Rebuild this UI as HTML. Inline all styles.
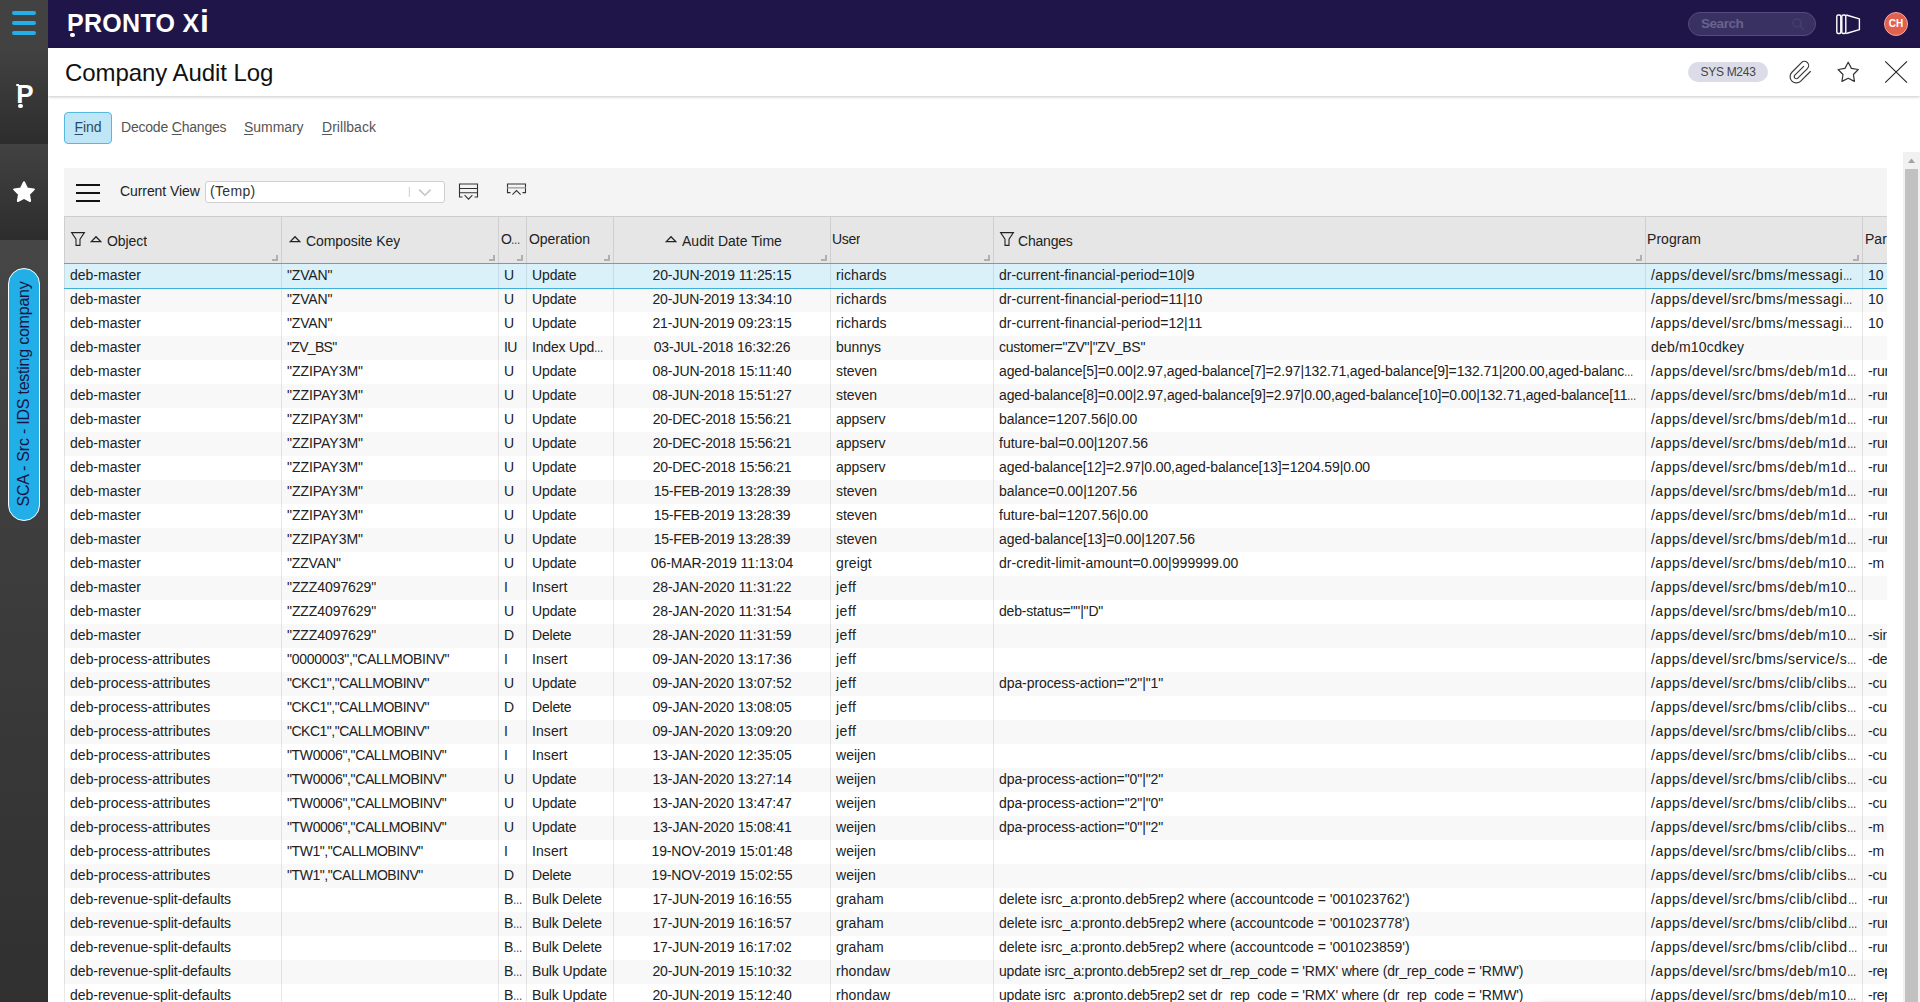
<!DOCTYPE html><html lang="en"><head><meta charset="utf-8"><title>Company Audit Log</title><style>
*{box-sizing:border-box}
html,body{margin:0;padding:0}
body{width:1920px;height:1002px;overflow:hidden;position:relative;background:#fff;
 font-family:"Liberation Sans",sans-serif;font-size:14px;color:#212121}
.abs{position:absolute}
#side{left:0;top:0;width:48px;height:1002px;background:linear-gradient(#464646,#2e2e2e)}
#side .c0{left:0;top:0;width:48px;height:48px;background:#424242}
#side .c1{left:0;top:48px;width:48px;height:96px;background:linear-gradient(#424242,#2d2d2d)}
#side .c2{left:0;top:144px;width:48px;height:96px;background:linear-gradient(#424242,#2d2d2d)}
#side .c3{left:0;top:240px;width:48px;height:762px;background:linear-gradient(#464646,#303030)}
.hb{left:12px;width:24px;height:4.5px;border-radius:2.5px;background:#24b0e6}
#top{left:48px;top:0;width:1872px;height:48px;background:#201548}
#logo{left:67px;top:7px;height:32px;line-height:32px;font-size:25px;font-weight:bold;color:#fff;white-space:nowrap;letter-spacing:.3px}
#search{left:1688px;top:12px;width:128px;height:24px;border-radius:12px;background:#3a3163;border:1px solid #544c7d;color:#69628f;font-weight:bold;font-size:13.5px;line-height:22px;padding-left:12px;letter-spacing:-.45px}
#avatar{left:1884px;top:12px;width:24px;height:24px;border-radius:12px;background:#e2604f;border:1px solid #f0a79b;color:#fff;font-size:10px;font-weight:bold;text-align:center;line-height:22px}
#title{left:65px;top:56px;height:34px;line-height:34px;font-size:24px;color:#111;white-space:nowrap}
#tbar{left:48px;top:48px;width:1872px;height:48px;background:#fff;box-shadow:0 1px 3px rgba(0,0,0,.22)}
#badge{left:1688px;top:62px;width:80px;height:20px;border-radius:10px;background:#dcdce8;color:#444;font-size:12px;line-height:20px;text-align:center;white-space:nowrap}
.btn{top:112px;height:32px;line-height:30px;color:#555;white-space:nowrap}
.btn u{text-decoration-thickness:1px;text-underline-offset:1.5px}
#find{left:64px;width:48px;border:1px solid #55b9e2;border-radius:4px;background:#bfe6f6;text-align:center;color:#2a4a66;line-height:28px}
#tool{left:64px;top:168px;width:1823px;height:48px;background:#f4f4f4}
.tl{left:76px;width:24px;height:2px;background:#111}
#cv{left:120px;top:180px;height:22px;line-height:22px;white-space:nowrap;color:#222}
#sel{left:205px;top:181px;width:240px;height:22px;border:1px solid #cfcfcf;border-radius:3px;background:#fff;line-height:18px;padding-left:4px;color:#333}
#grid{left:64px;top:216px;width:1823px;height:786px;overflow:hidden}
#hdr{left:0;top:0;width:1823px;height:47px;background:#e6e6e6;border-top:1px solid #cdcdcd}
.h{top:0;height:46px;line-height:46px;white-space:nowrap;color:#222;overflow:hidden}
.hs{top:1px;width:1px;height:46px;background:#cfcfcf}
.rz{width:6px;height:6px;border-right:2px solid #b0b0b0;border-bottom:2px solid #b0b0b0;top:39px}
.r{left:0;width:1823px;height:24px;line-height:24px;white-space:nowrap}
.r.e{background:#f8f8f8}
.r.sel{background:#daf1fa}
.c{top:-1px;height:24px;overflow:hidden;white-space:nowrap;padding-left:5px}
.vs{top:48px;width:1px;height:740px;background:rgba(0,0,0,.09)}
#sb{left:1903px;top:152px;width:17px;height:850px;background:#f1f1f1}
#sb .th{left:2px;top:17px;width:13px;height:840px;background:#c1c1c1}
</style></head><body>
<div id="top" class="abs"></div>
<div id="logo" class="abs">PRONTO X<span style="font-size:32px;line-height:0;margin-left:.6px">i</span></div><div class="abs" style="left:70.2px;top:32.6px;width:4.6px;height:4.6px;border-radius:50%;background:#fff"></div><div class="abs" style="left:68px;top:30.6px;width:8px;height:2.2px;background:#201548"></div>
<div id="search" class="abs">Search</div><svg class="abs" style="left:1788px;top:14px" width="20" height="20" viewBox="0 0 20 20" fill="none" stroke="#463e70" stroke-width="1.5"><circle cx="9" cy="9" r="4"/><path d="M12 12 L15.5 15.5"/></svg>
<svg class="abs" style="left:1832px;top:10px" width="32" height="28" viewBox="0 0 32 28" fill="none" stroke="#fff" stroke-width="1.4" stroke-linejoin="round"><rect x="4.8" y="5" width="4" height="18.5" rx="1.5"/><rect x="9.8" y="5" width="4" height="18.5" rx="1.5"/><path d="M14.2 5 L27.4 8.8 L27.4 19.7 L14.2 23.5"/></svg>
<div id="avatar" class="abs">CH</div>
<div id="tbar" class="abs"></div>
<div id="title" class="abs" style="letter-spacing:-0.064px">Company Audit Log</div>
<div id="badge" class="abs" style="letter-spacing:-0.283px">SYS M243</div>
<svg class="abs" style="left:1788.4px;top:59.6px" width="25" height="25" viewBox="0 0 24 24" fill="none" stroke="#3a3a3a" stroke-width="1.15" stroke-linecap="round" stroke-linejoin="round"><path d="M21.44 11.05l-9.19 9.19a6 6 0 0 1-8.49-8.49l9.19-9.19a4 4 0 0 1 5.66 5.66l-9.2 9.19a2 2 0 0 1-2.83-2.83l8.49-8.48"/></svg>
<svg class="abs" style="left:1834px;top:58px" width="28" height="28" viewBox="0 0 28 28" fill="none" stroke="#333" stroke-width="1.2" stroke-linejoin="round"><path d="M14.20 4.20 L17.43 10.35 L24.28 11.52 L19.43 16.50 L20.43 23.38 L14.20 20.30 L7.97 23.38 L8.97 16.50 L4.12 11.52 L10.97 10.35 Z"/></svg>
<svg class="abs" style="left:1882px;top:58px" width="28" height="28" viewBox="0 0 28 28" fill="none" stroke="#222" stroke-width="1.1"><path d="M3.2 3.4 L25 24.6 M25 3.4 L3.2 24.6"/></svg>
<div id="side" class="abs"><div class="abs c0"></div><div class="abs c1"></div><div class="abs c2"></div><div class="abs c3"></div>
<div class="abs hb" style="top:10.6px"></div><div class="abs hb" style="top:20.6px"></div><div class="abs hb" style="top:30.6px"></div>
<div class="abs" style="left:16.2px;top:78.8px;width:20px;height:30px;line-height:30px;font-size:26px;font-weight:bold;color:#fff">P</div><div class="abs" style="left:18.4px;top:103.8px;width:4.4px;height:4.4px;border-radius:50%;background:#fff"></div><div class="abs" style="left:15.6px;top:84.2px;width:3px;height:1.8px;background:#fff;border-radius:1px 0 0 1px"></div>
<svg class="abs" style="left:10px;top:178px" width="28" height="28" viewBox="0 0 28 28"><path fill="#fff" stroke="#fff" stroke-width="2" stroke-linejoin="round" d="M14.00 4.20 L17.06 10.39 L23.89 11.39 L18.95 16.21 L20.11 23.01 L14.00 19.80 L7.89 23.01 L9.05 16.21 L4.11 11.39 L10.94 10.39 Z"/></svg>
<div class="abs" style="left:8px;top:268px;width:32px;height:253px;border-radius:16px;background:#22aee6;border:1.5px solid #fff"></div>
<div class="abs" style="left:8px;top:268px;width:32px;height:253px"><div style="position:absolute;left:16px;top:126px;width:0;height:0"><div id="pill" style="position:absolute;white-space:nowrap;font-size:16px;color:#1a1446;transform:translate(-50%,-50%) rotate(-90deg);line-height:20px;letter-spacing:-0.228px">SCA - Src - IDS testing company</div></div></div>
</div>
<div id="find" class="abs btn" style="letter-spacing:-0.120px"><u>F</u>ind</div>
<div class="abs btn" style="left:121px;letter-spacing:-0.203px">Decode <u>C</u>hanges</div>
<div class="abs btn" style="left:244px;letter-spacing:-0.052px"><u>S</u>ummary</div>
<div class="abs btn" style="left:322px;letter-spacing:0.035px"><u>D</u>rillback</div>
<div id="tool" class="abs"></div>
<div class="abs tl" style="top:184px"></div><div class="abs tl" style="top:192px"></div><div class="abs tl" style="top:200px"></div>
<div id="cv" class="abs" style="letter-spacing:-0.079px">Current View</div>
<div id="sel" class="abs" style="letter-spacing:0.331px">(Temp)</div>
<svg class="abs" style="left:405px;top:183px" width="32" height="18" viewBox="0 0 32 18" fill="none"><path d="M4.3 3.8 V14" stroke="#d0d0d0" stroke-width="1"/><path d="M14.2 6.6 L19.9 12.2 L25.6 6.6" stroke="#c4c4c4" stroke-width="1.6"/></svg>
<svg class="abs" style="left:456px;top:180px" width="26" height="24" viewBox="0 0 26 24" fill="none" stroke="#333" stroke-width="1.1"><path d="M6.5 17 H3.5 V4 H21.5 V17 H18.5"/><path d="M3.5 8.5 H21.5 M3.5 12.8 H21.5"/><path d="M8.6 15.2 L12.5 19.2 L16.4 15.2"/></svg>
<svg class="abs" style="left:504px;top:180px" width="26" height="24" viewBox="0 0 26 24" fill="none" stroke="#333" stroke-width="1.1"><path d="M6.5 12.6 H3.5 V4 H21.5 V12.6 H18.5"/><path d="M3.5 7.8 H21.5" stroke="#aaa" stroke-width="1.6"/><path d="M8.4 14.6 L12.5 10.6 L16.6 14.6"/></svg>
<div id="grid" class="abs">
<div id="hdr" class="abs"></div>
<svg width="16" height="16" viewBox="0 0 16 16" fill="none" stroke="#222" stroke-width="1.1" stroke-linejoin="miter" style="position:absolute;left:6px;top:15px"><path d="M1.6 1.6 H14.4 L10 8.2 V14.4 H6 V8.2 Z"/></svg>
<svg width="14" height="10" viewBox="0 0 14 10" fill="none" stroke="#222" stroke-width="1.3" stroke-linejoin="miter" style="position:absolute;left:25px;top:18px"><path d="M2.3 7.6 L7 2.7 L11.7 7.6 Z"/></svg>
<div class="abs h" style="left:43px;top:2px;letter-spacing:-0.055px">Object</div>
<svg width="14" height="10" viewBox="0 0 14 10" fill="none" stroke="#222" stroke-width="1.3" stroke-linejoin="miter" style="position:absolute;left:224px;top:18px"><path d="M2.3 7.6 L7 2.7 L11.7 7.6 Z"/></svg>
<div class="abs h" style="left:242px;top:2px;letter-spacing:-0.065px">Composite Key</div>
<div class="abs h" style="left:437px;letter-spacing:-1.266px">O<span style="display:inline-block;width:9.4px;letter-spacing:0;transform:scaleX(.67);transform-origin:0 50%">…</span></div>
<div class="abs h" style="left:465px;letter-spacing:-0.062px">Operation</div>
<svg width="14" height="10" viewBox="0 0 14 10" fill="none" stroke="#222" stroke-width="1.3" stroke-linejoin="miter" style="position:absolute;left:600px;top:18px"><path d="M2.3 7.6 L7 2.7 L11.7 7.6 Z"/></svg>
<div class="abs h" style="left:618px;top:2px;letter-spacing:0.018px">Audit Date Time</div>
<div class="abs h" style="left:768px;letter-spacing:-0.278px">User</div>
<svg width="16" height="16" viewBox="0 0 16 16" fill="none" stroke="#222" stroke-width="1.1" stroke-linejoin="miter" style="position:absolute;left:935px;top:15px"><path d="M1.6 1.6 H14.4 L10 8.2 V14.4 H6 V8.2 Z"/></svg>
<div class="abs h" style="left:954px;top:2px;letter-spacing:-0.199px">Changes</div>
<div class="abs h" style="left:1583px;letter-spacing:0.049px">Program</div>
<div class="abs h" style="left:1801px;letter-spacing:0.007px">Parameters</div>
<div class="abs hs" style="left:0px"></div>
<div class="abs hs" style="left:217px"></div>
<div class="abs rz" style="left:208px"></div>
<div class="abs hs" style="left:434px"></div>
<div class="abs rz" style="left:425px"></div>
<div class="abs hs" style="left:462px"></div>
<div class="abs rz" style="left:453px"></div>
<div class="abs hs" style="left:549px"></div>
<div class="abs rz" style="left:540px"></div>
<div class="abs hs" style="left:766px"></div>
<div class="abs rz" style="left:757px"></div>
<div class="abs hs" style="left:929px"></div>
<div class="abs rz" style="left:920px"></div>
<div class="abs hs" style="left:1581px"></div>
<div class="abs rz" style="left:1572px"></div>
<div class="abs hs" style="left:1798px"></div>
<div class="abs rz" style="left:1789px"></div>
<div class="r abs sel" style="top:48px">
<div class="abs c c0" style="left:1px;width:216px;letter-spacing:0.005px">deb-master</div>
<div class="abs c c1" style="left:218px;width:216px;letter-spacing:-0.149px">&quot;ZVAN&quot;</div>
<div class="abs c c2" style="left:435px;width:27px;letter-spacing:-1.047px">U</div>
<div class="abs c c3" style="left:463px;width:86px;letter-spacing:-0.120px">Update</div>
<div class="abs c c4" style="left:550px;width:216px;text-align:center;padding-left:0;letter-spacing:-0.076px">20-JUN-2019 11:25:15</div>
<div class="abs c c5" style="left:767px;width:162px;letter-spacing:0.105px">richards</div>
<div class="abs c c6" style="left:930px;width:651px;letter-spacing:0.000px">dr-current-financial-period=10|9</div>
<div class="abs c c7" style="left:1582px;width:216px;letter-spacing:0.422px">/apps/devel/src/bms/messagi<span style="display:inline-block;width:9.4px;letter-spacing:0;transform:scaleX(.67);transform-origin:0 50%">…</span></div>
<div class="abs c c8" style="left:1799px;width:24px;letter-spacing:0.072px">10</div>
</div>
<div class="r abs e" style="top:72px">
<div class="abs c c0" style="left:1px;width:216px;letter-spacing:0.005px">deb-master</div>
<div class="abs c c1" style="left:218px;width:216px;letter-spacing:-0.149px">&quot;ZVAN&quot;</div>
<div class="abs c c2" style="left:435px;width:27px;letter-spacing:-1.047px">U</div>
<div class="abs c c3" style="left:463px;width:86px;letter-spacing:-0.120px">Update</div>
<div class="abs c c4" style="left:550px;width:216px;text-align:center;padding-left:0;letter-spacing:-0.128px">20-JUN-2019 13:34:10</div>
<div class="abs c c5" style="left:767px;width:162px;letter-spacing:0.105px">richards</div>
<div class="abs c c6" style="left:930px;width:651px;letter-spacing:0.034px">dr-current-financial-period=11|10</div>
<div class="abs c c7" style="left:1582px;width:216px;letter-spacing:0.422px">/apps/devel/src/bms/messagi<span style="display:inline-block;width:9.4px;letter-spacing:0;transform:scaleX(.67);transform-origin:0 50%">…</span></div>
<div class="abs c c8" style="left:1799px;width:24px;letter-spacing:0.072px">10</div>
</div>
<div class="r abs" style="top:96px">
<div class="abs c c0" style="left:1px;width:216px;letter-spacing:0.005px">deb-master</div>
<div class="abs c c1" style="left:218px;width:216px;letter-spacing:-0.149px">&quot;ZVAN&quot;</div>
<div class="abs c c2" style="left:435px;width:27px;letter-spacing:-1.047px">U</div>
<div class="abs c c3" style="left:463px;width:86px;letter-spacing:-0.120px">Update</div>
<div class="abs c c4" style="left:550px;width:216px;text-align:center;padding-left:0;letter-spacing:-0.128px">21-JUN-2019 09:23:15</div>
<div class="abs c c5" style="left:767px;width:162px;letter-spacing:0.105px">richards</div>
<div class="abs c c6" style="left:930px;width:651px;letter-spacing:0.034px">dr-current-financial-period=12|11</div>
<div class="abs c c7" style="left:1582px;width:216px;letter-spacing:0.422px">/apps/devel/src/bms/messagi<span style="display:inline-block;width:9.4px;letter-spacing:0;transform:scaleX(.67);transform-origin:0 50%">…</span></div>
<div class="abs c c8" style="left:1799px;width:24px;letter-spacing:0.072px">10</div>
</div>
<div class="r abs e" style="top:120px">
<div class="abs c c0" style="left:1px;width:216px;letter-spacing:0.005px">deb-master</div>
<div class="abs c c1" style="left:218px;width:216px;letter-spacing:-0.674px">&quot;ZV_BS&quot;</div>
<div class="abs c c2" style="left:435px;width:27px;letter-spacing:-0.557px">IU</div>
<div class="abs c c3" style="left:463px;width:86px;letter-spacing:-0.195px">Index Upd<span style="display:inline-block;width:9.4px;letter-spacing:0;transform:scaleX(.67);transform-origin:0 50%">…</span></div>
<div class="abs c c4" style="left:550px;width:216px;text-align:center;padding-left:0;letter-spacing:-0.134px">03-JUL-2018 16:32:26</div>
<div class="abs c c5" style="left:767px;width:162px;letter-spacing:-0.049px">bunnys</div>
<div class="abs c c6" style="left:930px;width:651px;letter-spacing:-0.255px">customer=&quot;ZV&quot;|&quot;ZV_BS&quot;</div>
<div class="abs c c7" style="left:1582px;width:216px;letter-spacing:0.186px">deb/m10cdkey</div>
</div>
<div class="r abs" style="top:144px">
<div class="abs c c0" style="left:1px;width:216px;letter-spacing:0.005px">deb-master</div>
<div class="abs c c1" style="left:218px;width:216px;letter-spacing:-0.035px">&quot;ZZIPAY3M&quot;</div>
<div class="abs c c2" style="left:435px;width:27px;letter-spacing:-1.047px">U</div>
<div class="abs c c3" style="left:463px;width:86px;letter-spacing:-0.120px">Update</div>
<div class="abs c c4" style="left:550px;width:216px;text-align:center;padding-left:0;letter-spacing:-0.076px">08-JUN-2018 15:11:40</div>
<div class="abs c c5" style="left:767px;width:162px;letter-spacing:-0.020px">steven</div>
<div class="abs c c6" style="left:930px;width:651px;letter-spacing:-0.110px">aged-balance[5]=0.00|2.97,aged-balance[7]=2.97|132.71,aged-balance[9]=132.71|200.00,aged-balanc<span style="display:inline-block;width:9.4px;letter-spacing:0;transform:scaleX(.67);transform-origin:0 50%">…</span></div>
<div class="abs c c7" style="left:1582px;width:216px;letter-spacing:0.482px">/apps/devel/src/bms/deb/m1d<span style="display:inline-block;width:9.4px;letter-spacing:0;transform:scaleX(.67);transform-origin:0 50%">…</span></div>
<div class="abs c c8" style="left:1799px;width:24px;letter-spacing:-0.216px">-run</div>
</div>
<div class="r abs e" style="top:168px">
<div class="abs c c0" style="left:1px;width:216px;letter-spacing:0.005px">deb-master</div>
<div class="abs c c1" style="left:218px;width:216px;letter-spacing:-0.035px">&quot;ZZIPAY3M&quot;</div>
<div class="abs c c2" style="left:435px;width:27px;letter-spacing:-1.047px">U</div>
<div class="abs c c3" style="left:463px;width:86px;letter-spacing:-0.120px">Update</div>
<div class="abs c c4" style="left:550px;width:216px;text-align:center;padding-left:0;letter-spacing:-0.128px">08-JUN-2018 15:51:27</div>
<div class="abs c c5" style="left:767px;width:162px;letter-spacing:-0.020px">steven</div>
<div class="abs c c6" style="left:930px;width:651px;letter-spacing:-0.105px">aged-balance[8]=0.00|2.97,aged-balance[9]=2.97|0.00,aged-balance[10]=0.00|132.71,aged-balance[11<span style="display:inline-block;width:9.4px;letter-spacing:0;transform:scaleX(.67);transform-origin:0 50%">…</span></div>
<div class="abs c c7" style="left:1582px;width:216px;letter-spacing:0.482px">/apps/devel/src/bms/deb/m1d<span style="display:inline-block;width:9.4px;letter-spacing:0;transform:scaleX(.67);transform-origin:0 50%">…</span></div>
<div class="abs c c8" style="left:1799px;width:24px;letter-spacing:-0.216px">-run</div>
</div>
<div class="r abs" style="top:192px">
<div class="abs c c0" style="left:1px;width:216px;letter-spacing:0.005px">deb-master</div>
<div class="abs c c1" style="left:218px;width:216px;letter-spacing:-0.035px">&quot;ZZIPAY3M&quot;</div>
<div class="abs c c2" style="left:435px;width:27px;letter-spacing:-1.047px">U</div>
<div class="abs c c3" style="left:463px;width:86px;letter-spacing:-0.120px">Update</div>
<div class="abs c c4" style="left:550px;width:216px;text-align:center;padding-left:0;letter-spacing:-0.272px">20-DEC-2018 15:56:21</div>
<div class="abs c c5" style="left:767px;width:162px;letter-spacing:-0.048px">appserv</div>
<div class="abs c c6" style="left:930px;width:651px;letter-spacing:-0.028px">balance=1207.56|0.00</div>
<div class="abs c c7" style="left:1582px;width:216px;letter-spacing:0.482px">/apps/devel/src/bms/deb/m1d<span style="display:inline-block;width:9.4px;letter-spacing:0;transform:scaleX(.67);transform-origin:0 50%">…</span></div>
<div class="abs c c8" style="left:1799px;width:24px;letter-spacing:-0.216px">-run</div>
</div>
<div class="r abs e" style="top:216px">
<div class="abs c c0" style="left:1px;width:216px;letter-spacing:0.005px">deb-master</div>
<div class="abs c c1" style="left:218px;width:216px;letter-spacing:-0.035px">&quot;ZZIPAY3M&quot;</div>
<div class="abs c c2" style="left:435px;width:27px;letter-spacing:-1.047px">U</div>
<div class="abs c c3" style="left:463px;width:86px;letter-spacing:-0.120px">Update</div>
<div class="abs c c4" style="left:550px;width:216px;text-align:center;padding-left:0;letter-spacing:-0.272px">20-DEC-2018 15:56:21</div>
<div class="abs c c5" style="left:767px;width:162px;letter-spacing:-0.048px">appserv</div>
<div class="abs c c6" style="left:930px;width:651px;letter-spacing:0.007px">future-bal=0.00|1207.56</div>
<div class="abs c c7" style="left:1582px;width:216px;letter-spacing:0.482px">/apps/devel/src/bms/deb/m1d<span style="display:inline-block;width:9.4px;letter-spacing:0;transform:scaleX(.67);transform-origin:0 50%">…</span></div>
<div class="abs c c8" style="left:1799px;width:24px;letter-spacing:-0.216px">-run</div>
</div>
<div class="r abs" style="top:240px">
<div class="abs c c0" style="left:1px;width:216px;letter-spacing:0.005px">deb-master</div>
<div class="abs c c1" style="left:218px;width:216px;letter-spacing:-0.035px">&quot;ZZIPAY3M&quot;</div>
<div class="abs c c2" style="left:435px;width:27px;letter-spacing:-1.047px">U</div>
<div class="abs c c3" style="left:463px;width:86px;letter-spacing:-0.120px">Update</div>
<div class="abs c c4" style="left:550px;width:216px;text-align:center;padding-left:0;letter-spacing:-0.272px">20-DEC-2018 15:56:21</div>
<div class="abs c c5" style="left:767px;width:162px;letter-spacing:-0.048px">appserv</div>
<div class="abs c c6" style="left:930px;width:651px;letter-spacing:-0.093px">aged-balance[12]=2.97|0.00,aged-balance[13]=1204.59|0.00</div>
<div class="abs c c7" style="left:1582px;width:216px;letter-spacing:0.482px">/apps/devel/src/bms/deb/m1d<span style="display:inline-block;width:9.4px;letter-spacing:0;transform:scaleX(.67);transform-origin:0 50%">…</span></div>
<div class="abs c c8" style="left:1799px;width:24px;letter-spacing:-0.216px">-run</div>
</div>
<div class="r abs e" style="top:264px">
<div class="abs c c0" style="left:1px;width:216px;letter-spacing:0.005px">deb-master</div>
<div class="abs c c1" style="left:218px;width:216px;letter-spacing:-0.035px">&quot;ZZIPAY3M&quot;</div>
<div class="abs c c2" style="left:435px;width:27px;letter-spacing:-1.047px">U</div>
<div class="abs c c3" style="left:463px;width:86px;letter-spacing:-0.120px">Update</div>
<div class="abs c c4" style="left:550px;width:216px;text-align:center;padding-left:0;letter-spacing:-0.247px">15-FEB-2019 13:28:39</div>
<div class="abs c c5" style="left:767px;width:162px;letter-spacing:-0.020px">steven</div>
<div class="abs c c6" style="left:930px;width:651px;letter-spacing:-0.028px">balance=0.00|1207.56</div>
<div class="abs c c7" style="left:1582px;width:216px;letter-spacing:0.482px">/apps/devel/src/bms/deb/m1d<span style="display:inline-block;width:9.4px;letter-spacing:0;transform:scaleX(.67);transform-origin:0 50%">…</span></div>
<div class="abs c c8" style="left:1799px;width:24px;letter-spacing:-0.216px">-run</div>
</div>
<div class="r abs" style="top:288px">
<div class="abs c c0" style="left:1px;width:216px;letter-spacing:0.005px">deb-master</div>
<div class="abs c c1" style="left:218px;width:216px;letter-spacing:-0.035px">&quot;ZZIPAY3M&quot;</div>
<div class="abs c c2" style="left:435px;width:27px;letter-spacing:-1.047px">U</div>
<div class="abs c c3" style="left:463px;width:86px;letter-spacing:-0.120px">Update</div>
<div class="abs c c4" style="left:550px;width:216px;text-align:center;padding-left:0;letter-spacing:-0.247px">15-FEB-2019 13:28:39</div>
<div class="abs c c5" style="left:767px;width:162px;letter-spacing:-0.020px">steven</div>
<div class="abs c c6" style="left:930px;width:651px;letter-spacing:0.007px">future-bal=1207.56|0.00</div>
<div class="abs c c7" style="left:1582px;width:216px;letter-spacing:0.482px">/apps/devel/src/bms/deb/m1d<span style="display:inline-block;width:9.4px;letter-spacing:0;transform:scaleX(.67);transform-origin:0 50%">…</span></div>
<div class="abs c c8" style="left:1799px;width:24px;letter-spacing:-0.216px">-run</div>
</div>
<div class="r abs e" style="top:312px">
<div class="abs c c0" style="left:1px;width:216px;letter-spacing:0.005px">deb-master</div>
<div class="abs c c1" style="left:218px;width:216px;letter-spacing:-0.035px">&quot;ZZIPAY3M&quot;</div>
<div class="abs c c2" style="left:435px;width:27px;letter-spacing:-1.047px">U</div>
<div class="abs c c3" style="left:463px;width:86px;letter-spacing:-0.120px">Update</div>
<div class="abs c c4" style="left:550px;width:216px;text-align:center;padding-left:0;letter-spacing:-0.247px">15-FEB-2019 13:28:39</div>
<div class="abs c c5" style="left:767px;width:162px;letter-spacing:-0.020px">steven</div>
<div class="abs c c6" style="left:930px;width:651px;letter-spacing:-0.066px">aged-balance[13]=0.00|1207.56</div>
<div class="abs c c7" style="left:1582px;width:216px;letter-spacing:0.482px">/apps/devel/src/bms/deb/m1d<span style="display:inline-block;width:9.4px;letter-spacing:0;transform:scaleX(.67);transform-origin:0 50%">…</span></div>
<div class="abs c c8" style="left:1799px;width:24px;letter-spacing:-0.216px">-run</div>
</div>
<div class="r abs" style="top:336px">
<div class="abs c c0" style="left:1px;width:216px;letter-spacing:0.005px">deb-master</div>
<div class="abs c c1" style="left:218px;width:216px;letter-spacing:-0.151px">&quot;ZZVAN&quot;</div>
<div class="abs c c2" style="left:435px;width:27px;letter-spacing:-1.047px">U</div>
<div class="abs c c3" style="left:463px;width:86px;letter-spacing:-0.120px">Update</div>
<div class="abs c c4" style="left:550px;width:216px;text-align:center;padding-left:0;letter-spacing:-0.111px">06-MAR-2019 11:13:04</div>
<div class="abs c c5" style="left:767px;width:162px;letter-spacing:0.134px">greigt</div>
<div class="abs c c6" style="left:930px;width:651px;letter-spacing:0.052px">dr-credit-limit-amount=0.00|999999.00</div>
<div class="abs c c7" style="left:1582px;width:216px;letter-spacing:0.481px">/apps/devel/src/bms/deb/m10<span style="display:inline-block;width:9.4px;letter-spacing:0;transform:scaleX(.67);transform-origin:0 50%">…</span></div>
<div class="abs c c8" style="left:1799px;width:24px;letter-spacing:-0.098px">-m</div>
</div>
<div class="r abs e" style="top:360px">
<div class="abs c c0" style="left:1px;width:216px;letter-spacing:0.005px">deb-master</div>
<div class="abs c c1" style="left:218px;width:216px;letter-spacing:-0.082px">&quot;ZZZ4097629&quot;</div>
<div class="abs c c2" style="left:435px;width:27px;letter-spacing:-0.083px">I</div>
<div class="abs c c3" style="left:463px;width:86px;letter-spacing:0.077px">Insert</div>
<div class="abs c c4" style="left:550px;width:216px;text-align:center;padding-left:0;letter-spacing:-0.035px">28-JAN-2020 11:31:22</div>
<div class="abs c c5" style="left:767px;width:162px;letter-spacing:0.511px">jeff</div>
<div class="abs c c7" style="left:1582px;width:216px;letter-spacing:0.481px">/apps/devel/src/bms/deb/m10<span style="display:inline-block;width:9.4px;letter-spacing:0;transform:scaleX(.67);transform-origin:0 50%">…</span></div>
</div>
<div class="r abs" style="top:384px">
<div class="abs c c0" style="left:1px;width:216px;letter-spacing:0.005px">deb-master</div>
<div class="abs c c1" style="left:218px;width:216px;letter-spacing:-0.082px">&quot;ZZZ4097629&quot;</div>
<div class="abs c c2" style="left:435px;width:27px;letter-spacing:-1.047px">U</div>
<div class="abs c c3" style="left:463px;width:86px;letter-spacing:-0.120px">Update</div>
<div class="abs c c4" style="left:550px;width:216px;text-align:center;padding-left:0;letter-spacing:-0.035px">28-JAN-2020 11:31:54</div>
<div class="abs c c5" style="left:767px;width:162px;letter-spacing:0.511px">jeff</div>
<div class="abs c c6" style="left:930px;width:651px;letter-spacing:-0.180px">deb-status=&quot;&quot;|&quot;D&quot;</div>
<div class="abs c c7" style="left:1582px;width:216px;letter-spacing:0.481px">/apps/devel/src/bms/deb/m10<span style="display:inline-block;width:9.4px;letter-spacing:0;transform:scaleX(.67);transform-origin:0 50%">…</span></div>
</div>
<div class="r abs e" style="top:408px">
<div class="abs c c0" style="left:1px;width:216px;letter-spacing:0.005px">deb-master</div>
<div class="abs c c1" style="left:218px;width:216px;letter-spacing:-0.082px">&quot;ZZZ4097629&quot;</div>
<div class="abs c c2" style="left:435px;width:27px;letter-spacing:-0.944px">D</div>
<div class="abs c c3" style="left:463px;width:86px;letter-spacing:-0.178px">Delete</div>
<div class="abs c c4" style="left:550px;width:216px;text-align:center;padding-left:0;letter-spacing:-0.035px">28-JAN-2020 11:31:59</div>
<div class="abs c c5" style="left:767px;width:162px;letter-spacing:0.511px">jeff</div>
<div class="abs c c7" style="left:1582px;width:216px;letter-spacing:0.481px">/apps/devel/src/bms/deb/m10<span style="display:inline-block;width:9.4px;letter-spacing:0;transform:scaleX(.67);transform-origin:0 50%">…</span></div>
<div class="abs c c8" style="left:1799px;width:24px;letter-spacing:-0.090px">-sin</div>
</div>
<div class="r abs" style="top:432px">
<div class="abs c c0" style="left:1px;width:216px;letter-spacing:0.047px">deb-process-attributes</div>
<div class="abs c c1" style="left:218px;width:216px;letter-spacing:-0.285px">&quot;0000003&quot;,&quot;CALLMOBINV&quot;</div>
<div class="abs c c2" style="left:435px;width:27px;letter-spacing:-0.083px">I</div>
<div class="abs c c3" style="left:463px;width:86px;letter-spacing:0.077px">Insert</div>
<div class="abs c c4" style="left:550px;width:216px;text-align:center;padding-left:0;letter-spacing:-0.086px">09-JAN-2020 13:17:36</div>
<div class="abs c c5" style="left:767px;width:162px;letter-spacing:0.511px">jeff</div>
<div class="abs c c7" style="left:1582px;width:216px;letter-spacing:0.434px">/apps/devel/src/bms/service/s<span style="display:inline-block;width:9.4px;letter-spacing:0;transform:scaleX(.67);transform-origin:0 50%">…</span></div>
<div class="abs c c8" style="left:1799px;width:24px;letter-spacing:-0.353px">-de</div>
</div>
<div class="r abs e" style="top:456px">
<div class="abs c c0" style="left:1px;width:216px;letter-spacing:0.047px">deb-process-attributes</div>
<div class="abs c c1" style="left:218px;width:216px;letter-spacing:-0.489px">&quot;CKC1&quot;,&quot;CALLMOBINV&quot;</div>
<div class="abs c c2" style="left:435px;width:27px;letter-spacing:-1.047px">U</div>
<div class="abs c c3" style="left:463px;width:86px;letter-spacing:-0.120px">Update</div>
<div class="abs c c4" style="left:550px;width:216px;text-align:center;padding-left:0;letter-spacing:-0.086px">09-JAN-2020 13:07:52</div>
<div class="abs c c5" style="left:767px;width:162px;letter-spacing:0.511px">jeff</div>
<div class="abs c c6" style="left:930px;width:651px;letter-spacing:-0.082px">dpa-process-action=&quot;2&quot;|&quot;1&quot;</div>
<div class="abs c c7" style="left:1582px;width:216px;letter-spacing:0.486px">/apps/devel/src/bms/clib/clibs<span style="display:inline-block;width:9.4px;letter-spacing:0;transform:scaleX(.67);transform-origin:0 50%">…</span></div>
<div class="abs c c8" style="left:1799px;width:24px;letter-spacing:-0.182px">-cu</div>
</div>
<div class="r abs" style="top:480px">
<div class="abs c c0" style="left:1px;width:216px;letter-spacing:0.047px">deb-process-attributes</div>
<div class="abs c c1" style="left:218px;width:216px;letter-spacing:-0.489px">&quot;CKC1&quot;,&quot;CALLMOBINV&quot;</div>
<div class="abs c c2" style="left:435px;width:27px;letter-spacing:-0.944px">D</div>
<div class="abs c c3" style="left:463px;width:86px;letter-spacing:-0.178px">Delete</div>
<div class="abs c c4" style="left:550px;width:216px;text-align:center;padding-left:0;letter-spacing:-0.086px">09-JAN-2020 13:08:05</div>
<div class="abs c c5" style="left:767px;width:162px;letter-spacing:0.511px">jeff</div>
<div class="abs c c7" style="left:1582px;width:216px;letter-spacing:0.486px">/apps/devel/src/bms/clib/clibs<span style="display:inline-block;width:9.4px;letter-spacing:0;transform:scaleX(.67);transform-origin:0 50%">…</span></div>
<div class="abs c c8" style="left:1799px;width:24px;letter-spacing:-0.182px">-cu</div>
</div>
<div class="r abs e" style="top:504px">
<div class="abs c c0" style="left:1px;width:216px;letter-spacing:0.047px">deb-process-attributes</div>
<div class="abs c c1" style="left:218px;width:216px;letter-spacing:-0.489px">&quot;CKC1&quot;,&quot;CALLMOBINV&quot;</div>
<div class="abs c c2" style="left:435px;width:27px;letter-spacing:-0.083px">I</div>
<div class="abs c c3" style="left:463px;width:86px;letter-spacing:0.077px">Insert</div>
<div class="abs c c4" style="left:550px;width:216px;text-align:center;padding-left:0;letter-spacing:-0.086px">09-JAN-2020 13:09:20</div>
<div class="abs c c5" style="left:767px;width:162px;letter-spacing:0.511px">jeff</div>
<div class="abs c c7" style="left:1582px;width:216px;letter-spacing:0.486px">/apps/devel/src/bms/clib/clibs<span style="display:inline-block;width:9.4px;letter-spacing:0;transform:scaleX(.67);transform-origin:0 50%">…</span></div>
<div class="abs c c8" style="left:1799px;width:24px;letter-spacing:-0.182px">-cu</div>
</div>
<div class="r abs" style="top:528px">
<div class="abs c c0" style="left:1px;width:216px;letter-spacing:0.047px">deb-process-attributes</div>
<div class="abs c c1" style="left:218px;width:216px;letter-spacing:-0.357px">&quot;TW0006&quot;,&quot;CALLMOBINV&quot;</div>
<div class="abs c c2" style="left:435px;width:27px;letter-spacing:-0.083px">I</div>
<div class="abs c c3" style="left:463px;width:86px;letter-spacing:0.077px">Insert</div>
<div class="abs c c4" style="left:550px;width:216px;text-align:center;padding-left:0;letter-spacing:-0.086px">13-JAN-2020 12:35:05</div>
<div class="abs c c5" style="left:767px;width:162px;letter-spacing:0.019px">weijen</div>
<div class="abs c c7" style="left:1582px;width:216px;letter-spacing:0.486px">/apps/devel/src/bms/clib/clibs<span style="display:inline-block;width:9.4px;letter-spacing:0;transform:scaleX(.67);transform-origin:0 50%">…</span></div>
<div class="abs c c8" style="left:1799px;width:24px;letter-spacing:-0.182px">-cu</div>
</div>
<div class="r abs e" style="top:552px">
<div class="abs c c0" style="left:1px;width:216px;letter-spacing:0.047px">deb-process-attributes</div>
<div class="abs c c1" style="left:218px;width:216px;letter-spacing:-0.357px">&quot;TW0006&quot;,&quot;CALLMOBINV&quot;</div>
<div class="abs c c2" style="left:435px;width:27px;letter-spacing:-1.047px">U</div>
<div class="abs c c3" style="left:463px;width:86px;letter-spacing:-0.120px">Update</div>
<div class="abs c c4" style="left:550px;width:216px;text-align:center;padding-left:0;letter-spacing:-0.086px">13-JAN-2020 13:27:14</div>
<div class="abs c c5" style="left:767px;width:162px;letter-spacing:0.019px">weijen</div>
<div class="abs c c6" style="left:930px;width:651px;letter-spacing:-0.082px">dpa-process-action=&quot;0&quot;|&quot;2&quot;</div>
<div class="abs c c7" style="left:1582px;width:216px;letter-spacing:0.486px">/apps/devel/src/bms/clib/clibs<span style="display:inline-block;width:9.4px;letter-spacing:0;transform:scaleX(.67);transform-origin:0 50%">…</span></div>
<div class="abs c c8" style="left:1799px;width:24px;letter-spacing:-0.182px">-cu</div>
</div>
<div class="r abs" style="top:576px">
<div class="abs c c0" style="left:1px;width:216px;letter-spacing:0.047px">deb-process-attributes</div>
<div class="abs c c1" style="left:218px;width:216px;letter-spacing:-0.357px">&quot;TW0006&quot;,&quot;CALLMOBINV&quot;</div>
<div class="abs c c2" style="left:435px;width:27px;letter-spacing:-1.047px">U</div>
<div class="abs c c3" style="left:463px;width:86px;letter-spacing:-0.120px">Update</div>
<div class="abs c c4" style="left:550px;width:216px;text-align:center;padding-left:0;letter-spacing:-0.086px">13-JAN-2020 13:47:47</div>
<div class="abs c c5" style="left:767px;width:162px;letter-spacing:0.019px">weijen</div>
<div class="abs c c6" style="left:930px;width:651px;letter-spacing:-0.082px">dpa-process-action=&quot;2&quot;|&quot;0&quot;</div>
<div class="abs c c7" style="left:1582px;width:216px;letter-spacing:0.486px">/apps/devel/src/bms/clib/clibs<span style="display:inline-block;width:9.4px;letter-spacing:0;transform:scaleX(.67);transform-origin:0 50%">…</span></div>
<div class="abs c c8" style="left:1799px;width:24px;letter-spacing:-0.182px">-cu</div>
</div>
<div class="r abs e" style="top:600px">
<div class="abs c c0" style="left:1px;width:216px;letter-spacing:0.047px">deb-process-attributes</div>
<div class="abs c c1" style="left:218px;width:216px;letter-spacing:-0.357px">&quot;TW0006&quot;,&quot;CALLMOBINV&quot;</div>
<div class="abs c c2" style="left:435px;width:27px;letter-spacing:-1.047px">U</div>
<div class="abs c c3" style="left:463px;width:86px;letter-spacing:-0.120px">Update</div>
<div class="abs c c4" style="left:550px;width:216px;text-align:center;padding-left:0;letter-spacing:-0.086px">13-JAN-2020 15:08:41</div>
<div class="abs c c5" style="left:767px;width:162px;letter-spacing:0.019px">weijen</div>
<div class="abs c c6" style="left:930px;width:651px;letter-spacing:-0.082px">dpa-process-action=&quot;0&quot;|&quot;2&quot;</div>
<div class="abs c c7" style="left:1582px;width:216px;letter-spacing:0.486px">/apps/devel/src/bms/clib/clibs<span style="display:inline-block;width:9.4px;letter-spacing:0;transform:scaleX(.67);transform-origin:0 50%">…</span></div>
<div class="abs c c8" style="left:1799px;width:24px;letter-spacing:-0.098px">-m</div>
</div>
<div class="r abs" style="top:624px">
<div class="abs c c0" style="left:1px;width:216px;letter-spacing:0.047px">deb-process-attributes</div>
<div class="abs c c1" style="left:218px;width:216px;letter-spacing:-0.429px">&quot;TW1&quot;,&quot;CALLMOBINV&quot;</div>
<div class="abs c c2" style="left:435px;width:27px;letter-spacing:-0.083px">I</div>
<div class="abs c c3" style="left:463px;width:86px;letter-spacing:0.077px">Insert</div>
<div class="abs c c4" style="left:550px;width:216px;text-align:center;padding-left:0;letter-spacing:-0.159px">19-NOV-2019 15:01:48</div>
<div class="abs c c5" style="left:767px;width:162px;letter-spacing:0.019px">weijen</div>
<div class="abs c c7" style="left:1582px;width:216px;letter-spacing:0.486px">/apps/devel/src/bms/clib/clibs<span style="display:inline-block;width:9.4px;letter-spacing:0;transform:scaleX(.67);transform-origin:0 50%">…</span></div>
<div class="abs c c8" style="left:1799px;width:24px;letter-spacing:-0.098px">-m</div>
</div>
<div class="r abs e" style="top:648px">
<div class="abs c c0" style="left:1px;width:216px;letter-spacing:0.047px">deb-process-attributes</div>
<div class="abs c c1" style="left:218px;width:216px;letter-spacing:-0.429px">&quot;TW1&quot;,&quot;CALLMOBINV&quot;</div>
<div class="abs c c2" style="left:435px;width:27px;letter-spacing:-0.944px">D</div>
<div class="abs c c3" style="left:463px;width:86px;letter-spacing:-0.178px">Delete</div>
<div class="abs c c4" style="left:550px;width:216px;text-align:center;padding-left:0;letter-spacing:-0.159px">19-NOV-2019 15:02:55</div>
<div class="abs c c5" style="left:767px;width:162px;letter-spacing:0.019px">weijen</div>
<div class="abs c c7" style="left:1582px;width:216px;letter-spacing:0.486px">/apps/devel/src/bms/clib/clibs<span style="display:inline-block;width:9.4px;letter-spacing:0;transform:scaleX(.67);transform-origin:0 50%">…</span></div>
<div class="abs c c8" style="left:1799px;width:24px;letter-spacing:-0.182px">-cu</div>
</div>
<div class="r abs" style="top:672px">
<div class="abs c c0" style="left:1px;width:216px;letter-spacing:-0.030px">deb-revenue-split-defaults</div>
<div class="abs c c2" style="left:435px;width:27px;letter-spacing:-0.628px">B<span style="display:inline-block;width:9.4px;letter-spacing:0;transform:scaleX(.67);transform-origin:0 50%">…</span></div>
<div class="abs c c3" style="left:463px;width:86px;letter-spacing:-0.164px">Bulk Delete</div>
<div class="abs c c4" style="left:550px;width:216px;text-align:center;padding-left:0;letter-spacing:-0.128px">17-JUN-2019 16:16:55</div>
<div class="abs c c5" style="left:767px;width:162px;letter-spacing:0.056px">graham</div>
<div class="abs c c6" style="left:930px;width:651px;letter-spacing:-0.023px">delete isrc_a:pronto.deb5rep2 where (accountcode = &#x27;001023762&#x27;)</div>
<div class="abs c c7" style="left:1582px;width:216px;letter-spacing:0.482px">/apps/devel/src/bms/clib/clibd<span style="display:inline-block;width:9.4px;letter-spacing:0;transform:scaleX(.67);transform-origin:0 50%">…</span></div>
<div class="abs c c8" style="left:1799px;width:24px;letter-spacing:-0.216px">-run</div>
</div>
<div class="r abs e" style="top:696px">
<div class="abs c c0" style="left:1px;width:216px;letter-spacing:-0.030px">deb-revenue-split-defaults</div>
<div class="abs c c2" style="left:435px;width:27px;letter-spacing:-0.628px">B<span style="display:inline-block;width:9.4px;letter-spacing:0;transform:scaleX(.67);transform-origin:0 50%">…</span></div>
<div class="abs c c3" style="left:463px;width:86px;letter-spacing:-0.164px">Bulk Delete</div>
<div class="abs c c4" style="left:550px;width:216px;text-align:center;padding-left:0;letter-spacing:-0.128px">17-JUN-2019 16:16:57</div>
<div class="abs c c5" style="left:767px;width:162px;letter-spacing:0.056px">graham</div>
<div class="abs c c6" style="left:930px;width:651px;letter-spacing:-0.023px">delete isrc_a:pronto.deb5rep2 where (accountcode = &#x27;001023778&#x27;)</div>
<div class="abs c c7" style="left:1582px;width:216px;letter-spacing:0.482px">/apps/devel/src/bms/clib/clibd<span style="display:inline-block;width:9.4px;letter-spacing:0;transform:scaleX(.67);transform-origin:0 50%">…</span></div>
<div class="abs c c8" style="left:1799px;width:24px;letter-spacing:-0.216px">-run</div>
</div>
<div class="r abs" style="top:720px">
<div class="abs c c0" style="left:1px;width:216px;letter-spacing:-0.030px">deb-revenue-split-defaults</div>
<div class="abs c c2" style="left:435px;width:27px;letter-spacing:-0.628px">B<span style="display:inline-block;width:9.4px;letter-spacing:0;transform:scaleX(.67);transform-origin:0 50%">…</span></div>
<div class="abs c c3" style="left:463px;width:86px;letter-spacing:-0.164px">Bulk Delete</div>
<div class="abs c c4" style="left:550px;width:216px;text-align:center;padding-left:0;letter-spacing:-0.128px">17-JUN-2019 16:17:02</div>
<div class="abs c c5" style="left:767px;width:162px;letter-spacing:0.056px">graham</div>
<div class="abs c c6" style="left:930px;width:651px;letter-spacing:-0.023px">delete isrc_a:pronto.deb5rep2 where (accountcode = &#x27;001023859&#x27;)</div>
<div class="abs c c7" style="left:1582px;width:216px;letter-spacing:0.482px">/apps/devel/src/bms/clib/clibd<span style="display:inline-block;width:9.4px;letter-spacing:0;transform:scaleX(.67);transform-origin:0 50%">…</span></div>
<div class="abs c c8" style="left:1799px;width:24px;letter-spacing:-0.216px">-run</div>
</div>
<div class="r abs e" style="top:744px">
<div class="abs c c0" style="left:1px;width:216px;letter-spacing:-0.030px">deb-revenue-split-defaults</div>
<div class="abs c c2" style="left:435px;width:27px;letter-spacing:-0.628px">B<span style="display:inline-block;width:9.4px;letter-spacing:0;transform:scaleX(.67);transform-origin:0 50%">…</span></div>
<div class="abs c c3" style="left:463px;width:86px;letter-spacing:-0.132px">Bulk Update</div>
<div class="abs c c4" style="left:550px;width:216px;text-align:center;padding-left:0;letter-spacing:-0.128px">20-JUN-2019 15:10:32</div>
<div class="abs c c5" style="left:767px;width:162px;letter-spacing:0.069px">rhondaw</div>
<div class="abs c c6" style="left:930px;width:651px;letter-spacing:-0.174px">update isrc_a:pronto.deb5rep2 set dr_rep_code = &#x27;RMX&#x27; where (dr_rep_code = &#x27;RMW&#x27;)</div>
<div class="abs c c7" style="left:1582px;width:216px;letter-spacing:0.481px">/apps/devel/src/bms/deb/m10<span style="display:inline-block;width:9.4px;letter-spacing:0;transform:scaleX(.67);transform-origin:0 50%">…</span></div>
<div class="abs c c8" style="left:1799px;width:24px;letter-spacing:-0.259px">-rep</div>
</div>
<div class="r abs" style="top:768px">
<div class="abs c c0" style="left:1px;width:216px;letter-spacing:-0.030px">deb-revenue-split-defaults</div>
<div class="abs c c2" style="left:435px;width:27px;letter-spacing:-0.628px">B<span style="display:inline-block;width:9.4px;letter-spacing:0;transform:scaleX(.67);transform-origin:0 50%">…</span></div>
<div class="abs c c3" style="left:463px;width:86px;letter-spacing:-0.132px">Bulk Update</div>
<div class="abs c c4" style="left:550px;width:216px;text-align:center;padding-left:0;letter-spacing:-0.128px">20-JUN-2019 15:12:40</div>
<div class="abs c c5" style="left:767px;width:162px;letter-spacing:0.069px">rhondaw</div>
<div class="abs c c6" style="left:930px;width:651px;letter-spacing:-0.174px">update isrc_a:pronto.deb5rep2 set dr_rep_code = &#x27;RMX&#x27; where (dr_rep_code = &#x27;RMW&#x27;)</div>
<div class="abs c c7" style="left:1582px;width:216px;letter-spacing:0.481px">/apps/devel/src/bms/deb/m10<span style="display:inline-block;width:9.4px;letter-spacing:0;transform:scaleX(.67);transform-origin:0 50%">…</span></div>
<div class="abs c c8" style="left:1799px;width:24px;letter-spacing:-0.259px">-rep</div>
</div>
<div class="abs vs" style="left:0px"></div>
<div class="abs vs" style="left:217px"></div>
<div class="abs vs" style="left:434px"></div>
<div class="abs vs" style="left:462px"></div>
<div class="abs vs" style="left:549px"></div>
<div class="abs vs" style="left:766px"></div>
<div class="abs vs" style="left:929px"></div>
<div class="abs vs" style="left:1581px"></div>
<div class="abs vs" style="left:1798px"></div>
<div class="abs" style="left:0;top:47px;width:1823px;height:1px;background:#3fb1d8"></div>
<div class="abs" style="left:0;top:72px;width:1823px;height:1px;background:#3fb1d8"></div>
<div class="abs" style="left:1476px;top:791px;width:320px;height:10px;box-shadow:0 0 7px 1px rgba(0,0,0,.55)"></div>
</div>
<div id="sb" class="abs"><svg class="abs" style="left:0;top:0" width="17" height="17" viewBox="0 0 17 17"><path d="M5 11 L8.5 6.5 L12 11 Z" fill="#a3a3a3"/></svg><div class="abs th"></div></div>
</body></html>
